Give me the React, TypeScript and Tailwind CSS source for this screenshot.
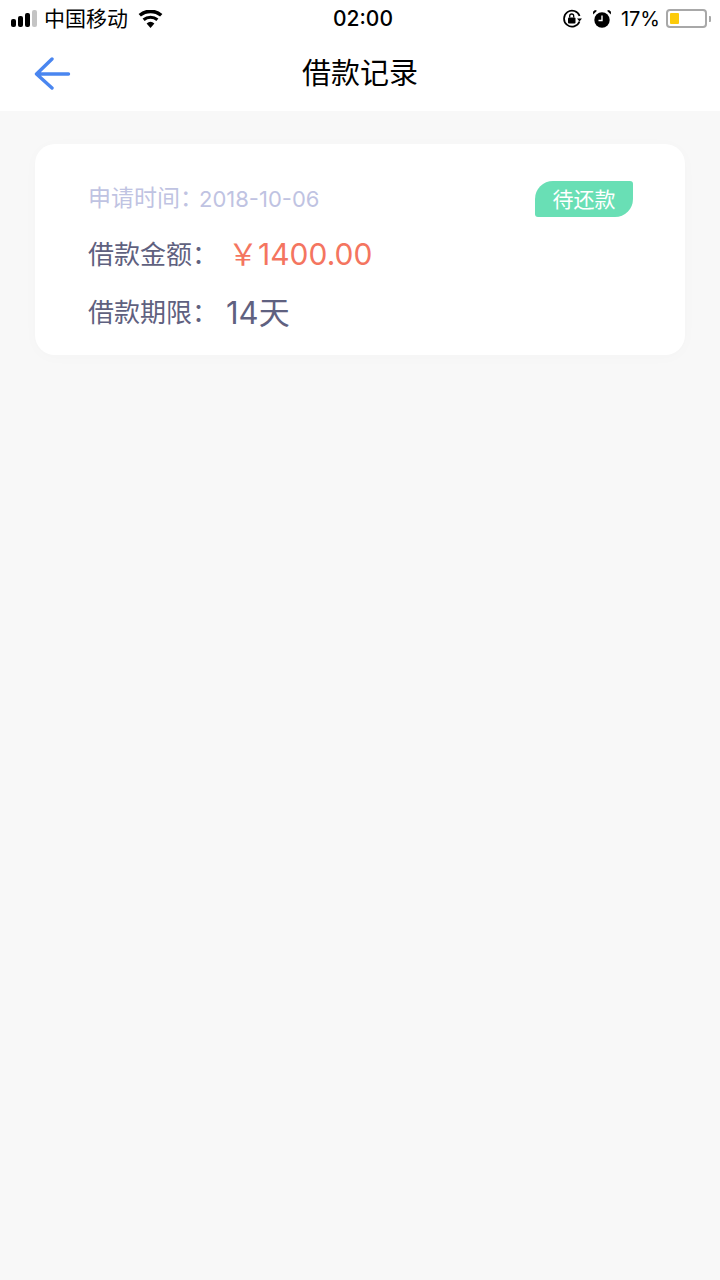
const font = { fontFamily: 'Inter, "Noto Sans CJK SC", sans-serif' };

function StatusBar() {
  return (
    <div className="flex h-[37px] items-center text-black">
      <div className="flex flex-1 items-center pl-[11px]">
        <div className="flex items-end gap-[2px]">
          <span className="h-[8px] w-[5px] rounded-[2px] bg-black" />
          <span className="h-[11px] w-[5px] rounded-[2px] bg-black" />
          <span className="h-[14px] w-[5px] rounded-[2px] bg-black" />
          <span className="h-[17px] w-[5px] rounded-[2px] bg-[#c4c4c4]" />
        </div>
        <span className="ml-[7px] text-[21px] leading-none">中国移动</span>
        <svg className="ml-[10px] h-[18px] w-[25px]" viewBox="0 0 25 18">
          <path d="M12.5 18 L8.6 13.4 A6 6 0 0 1 16.4 13.4 Z" fill="#000" />
          <path d="M6.6 11 L4.6 8.6 A12.2 12.2 0 0 1 20.4 8.6 L18.4 11 A9.2 9.2 0 0 0 6.6 11 Z" fill="#000" />
          <path d="M2.9 6.6 L0.6 3.9 A18.4 18.4 0 0 1 24.4 3.9 L22.1 6.6 A15 15 0 0 0 2.9 6.6 Z" fill="#000" />
        </svg>
      </div>
      <span className="absolute left-[333px] text-[21px] font-medium leading-none">02:00</span>
      <div className="flex items-center pr-[9px]">
        <svg className="h-[20px] w-[20px]" viewBox="0 0 20 20" fill="none">
          <path d="M17.5 12.5A8 8 0 1 1 17.6 7" stroke="#000" strokeWidth="1.7" />
          <path d="M15 9.5h5l-2.5 3z" fill="#000" />
          <rect x="6" y="8.5" width="7.5" height="6" rx="1" fill="#000" />
          <path d="M7.7 8.5V7a2 2 0 0 1 4 0v1.5" stroke="#000" strokeWidth="1.3" />
        </svg>
        <svg className="ml-[10px] h-[20px] w-[20px]" viewBox="0 0 20 20" fill="none">
          <circle cx="10" cy="11" r="7.7" fill="#000" />
          <path d="M10 6.5V11.5H6.5" stroke="#fff" strokeWidth="1.4" />
          <path d="M1.2 5.5 5 1.8 3 1 1 2.8zM18.8 5.5 15 1.8 17 1 19 2.8z" fill="#000" />
        </svg>
        <span className="ml-[9px] text-[20px] leading-none">17%</span>
        <div className="ml-[6px] h-[19px] w-[41px] rounded-[4px] border-2 border-[#a8a8a8] p-[2px]">
          <div className="h-full w-[9px] rounded-[1px] bg-[#fdcb0a]" />
        </div>
        <span className="ml-[2px] h-[6px] w-[2px] rounded-r-[1px] bg-[#a8a8a8]" />
      </div>
    </div>
  );
}

export default function App() {
  return (
    <div className="relative flex min-h-[1280px] w-[720px] flex-col bg-[#f8f8f8]" style={font}>
      <div className="bg-white">
        <StatusBar />
        <div className="relative flex h-[74px] items-center justify-center">
          <svg className="absolute left-[33px] top-[19px] h-[34px] w-[38px]" viewBox="0 0 38 34" fill="none">
            <path d="M19 3 3.500 18 19 32M3.500 18H35.500" stroke="#4a86f0" strokeWidth="3.400" strokeLinecap="round" strokeLinejoin="round" />
          </svg>
          <h1 className="pb-[1px] text-[29px] font-normal leading-none text-black">借款记录</h1>
        </div>
      </div>
      <div className="px-[35px] pt-[33px]">
        <div className="h-[211px] rounded-[20px] bg-white pl-[53px] pr-[52px] pt-[36px] shadow-[0_2px_16px_rgba(0,0,0,0.02)]">
          <div className="flex items-center justify-between">
            <div className="flex h-[37px] items-center text-[23px] leading-none text-[#bfc3e2]">
              <span className="w-[111px] whitespace-nowrap">申请时间：</span>
              <span className="text-[22px]">2018-10-06</span>
            </div>
            <span className="mt-[1px] flex h-[36px] w-[98px] items-center justify-center rounded-tl-[18px] rounded-tr-[3px] rounded-br-[18px] rounded-bl-[3px] bg-[#69dfb5] text-[21px] leading-none text-white">待还款</span>
          </div>
          <div className="mt-[19px] flex h-[36px] items-center">
            <span className="mt-[1px] w-[140px] whitespace-nowrap text-[26px] leading-none text-[#5f6180]">借款金额：</span>
            <span className="text-[30px] leading-none text-[#f47560]">￥1400.00</span>
          </div>
          <div className="mt-[22px] flex h-[36px] items-center">
            <span className="mt-[1px] w-[138px] whitespace-nowrap text-[26px] leading-none text-[#5f6180]">借款期限：</span>
            <span className="text-[31px] leading-none text-[#5f6180]">14天</span>
          </div>
        </div>
      </div>
    </div>
  );
}
